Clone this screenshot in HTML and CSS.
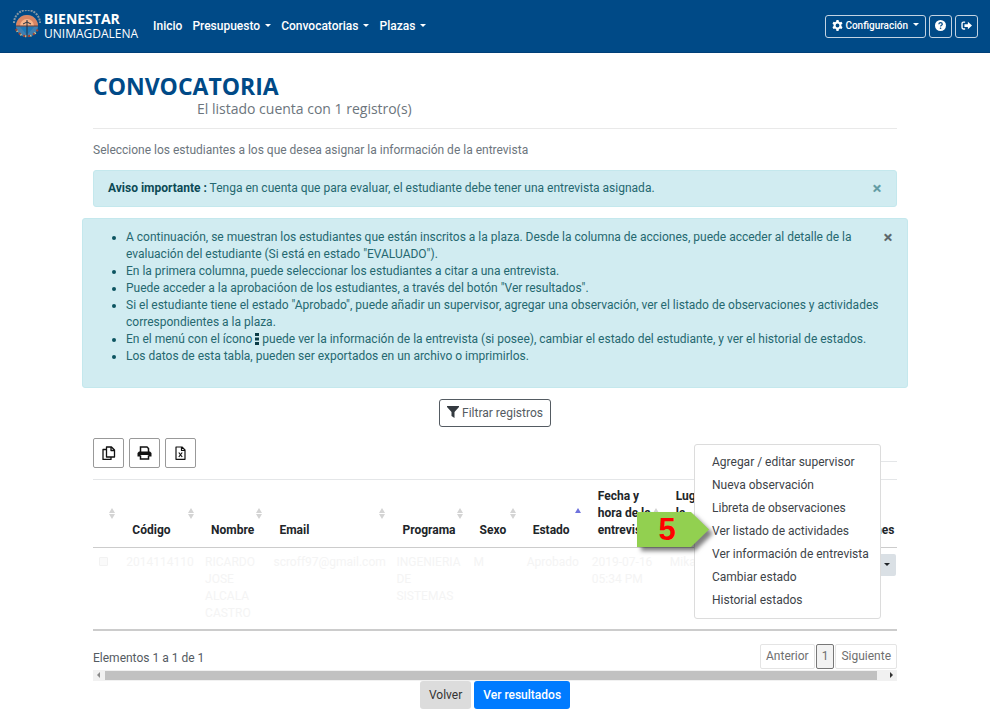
FILE: index.html
```html
<!DOCTYPE html>
<html lang="es">
<head>
<meta charset="utf-8">
<meta name="viewport" content="width=device-width, initial-scale=1">
<title>Bienestar Unimagdalena - Convocatoria</title>
<link rel="stylesheet" href="styles.css">
</head>
<body>
<header class="topbar">
  <a class="brand" href="#">
    <svg class="crest" viewBox="0 0 30 32" aria-hidden="true">
      <path d="M2 13a13 13 0 0 1 26 0" fill="none" stroke="#8496a3" stroke-width="2" stroke-dasharray="2 1" />
      <circle cx="15" cy="16" r="11" fill="#3f7fb0" />
      <path d="M4 16a11 11 0 0 1 22 0z" fill="#d98563" />
      <path d="M8 16a7 7 0 0 1 14 0z" fill="#f7b48a" />
      <path d="M4 16h22" stroke="#5b3d3a" stroke-width="1" />
      <path d="M8 17l7 8 7-8z" fill="#1d78b8" />
      <path d="M15 10v17M11 14l4-2 4 2" fill="none" stroke="#234" stroke-width="1" />
      <path d="M4 19a12 12 0 0 0 22 0" fill="none" stroke="#a5402f" stroke-width="2" stroke-dasharray="2 3" />
      <path d="M5 21a12 12 0 0 0 20 0" fill="none" stroke="#e3cf86" stroke-width="2" stroke-dasharray="1 4" />
    </svg>
    <span class="brand-text"><strong>BIENESTAR</strong><span>UNIMAGDALENA</span></span>
  </a>
  <nav class="nav">
    <a href="#">Inicio</a>
    <a href="#" class="caret">Presupuesto</a>
    <a href="#" class="caret">Convocatorias</a>
    <a href="#" class="caret">Plazas</a>
  </nav>
  <div class="tools">
    <button type="button" class="tool caret">
      <svg viewBox="0 0 16 16" aria-hidden="true"><path fill="currentColor" fill-rule="evenodd" d="M6.5 0h3l.5 2.3 1.5.8 2.3-.7 1.5 2.6L13.6 6.600v2L15.300 10.600l-1.500 2.600-2.300-.7-1.500.9L9.500 16h-3L6 13.400l-1.500-.9-2.300.7L.7 10.600 2.400 8.900v-2L.7 5l1.500-2.600 2.300.7L6 2.300zM8 5.200a2.800 2.800 0 1 0 0 5.600 2.800 2.800 0 0 0 0-5.600z"/></svg>
      Configuración</button>
    <button type="button" class="tool tool-icon" aria-label="Ayuda">
      <svg viewBox="0 0 16 16" aria-hidden="true"><circle cx="8" cy="8" r="8" fill="currentColor"/><path d="M5.600 6.200c.2-3 5-3 5 0 0 1.600-2.400 1.600-2.400 3.300" fill="none" stroke="#004a87" stroke-width="1.800"/><circle cx="8.100" cy="12" r="1.200" fill="#004a87"/></svg>
    </button>
    <button type="button" class="tool tool-icon" aria-label="Salir">
      <svg viewBox="0 0 16 16" aria-hidden="true"><path d="M6 3H3.500Q1.500 3 1.500 5v6q0 2 2 2H6" fill="none" stroke="currentColor" stroke-width="2"/><path d="M5 6h5V2.500L16 8l-6 5.500V10H5z" fill="currentColor"/></svg>
    </button>
  </div>
</header>

<main class="page">
  <div class="heading">
    <h1>CONVOCATORIA</h1>
    <p>El listado cuenta con 1 registro(s)</p>
  </div>
  <p class="lead">Seleccione los estudiantes a los que desea asignar la información de la entrevista</p>

  <section class="alert">
    <p><strong>Aviso importante :</strong> Tenga en cuenta que para evaluar, el estudiante debe tener una entrevista asignada.</p>
    <button type="button" class="close close-soft" aria-label="Cerrar aviso">×</button>
  </section>

  <section class="alert alert-wide">
    <ul>
      <li>A continuación, se muestran los estudiantes que están inscritos a la plaza. Desde la columna de acciones, puede acceder al detalle de la evaluación del estudiante (Si está en estado "EVALUADO").</li>
      <li>En la primera columna, puede seleccionar los estudiantes a citar a una entrevista.</li>
      <li>Puede acceder a la aprobacióon de los estudiantes, a través del botón "Ver resultados".</li>
      <li>Si el estudiante tiene el estado "Aprobado", puede añadir un supervisor, agregar una observación, ver el listado de observaciones y actividades correspondientes a la plaza.</li>
      <li>En el menú con el ícono <svg class="dots" viewBox="0 0 4 12" aria-hidden="true"><path fill="currentColor" d="M0 0h4v3H0zM0 4.500h4v3H0zM0 9h4v3H0z"/></svg> puede ver la información de la entrevista (si posee), cambiar el estado del estudiante, y ver el historial de estados.</li>
      <li>Los datos de esta tabla, pueden ser exportados en un archivo o imprimirlos.</li>
    </ul>
    <button type="button" class="close" aria-label="Cerrar ayuda">×</button>
  </section>

  <button type="button" class="filter">
    <svg viewBox="0 0 12 12" aria-hidden="true"><path fill="currentColor" d="M0 0h12v1L7.500 6v6L4.500 10V6L0 1z"/></svg>
    Filtrar registros</button>

  <div class="table-tools">
    <button type="button" class="export" aria-label="Copiar">
      <svg viewBox="0 0 14 14" aria-hidden="true"><path d="M5 1h5l3 3v7H5zM9.500 1v3.500H13M5 3.500H1.500v10h8V11" fill="none" stroke="currentColor" stroke-width="1.300" stroke-linejoin="round"/></svg>
    </button>
    <button type="button" class="export" aria-label="Imprimir">
      <svg viewBox="0 0 14 14" aria-hidden="true"><path d="M3 6V1h6.500L11 2.500V6M3 9.500V13h8V9.500" fill="none" stroke="currentColor" stroke-width="1.500"/><path d="M1.500 5.500h11L14 7v3.500h-3V9H3v1.500H0V7z" fill="currentColor"/></svg>
    </button>
    <button type="button" class="export" aria-label="Exportar a Excel">
      <svg viewBox="0 0 14 14" aria-hidden="true"><path d="M2.500 1H8.500l3 3v9.300h-9zM8 1v3.500h3.500" fill="none" stroke="currentColor" stroke-width="1.200" stroke-linejoin="round"/><path d="M5.300 6.500l3.400 4.500M8.700 6.500L5.300 11" fill="none" stroke="currentColor" stroke-width="1.200"/></svg>
    </button>
    <input class="search" type="search" aria-label="Buscar">
  </div>

  <table class="grid">
    <colgroup><col class="c-check"><col class="c-code"><col class="c-name"><col class="c-mail"><col class="c-prog"><col class="c-sex"><col class="c-state"><col class="c-date"><col class="c-place"><col></colgroup>
    <thead>
      <tr>
        <th class="sort"></th>
        <th class="sort">Código</th>
        <th class="sort">Nombre</th>
        <th class="sort">Email</th>
        <th class="sort">Programa</th>
        <th class="sort">Sexo</th>
        <th class="sort sorted">Estado</th>
        <th class="sort">Fecha y hora de la entrevista</th>
        <th>Lugar de<br>la<br>entrevista</th>
        <th>Acciones</th>
      </tr>
    </thead>
    <tbody>
      <tr>
        <td><input type="checkbox" class="pick" aria-label="Seleccionar estudiante"></td>
        <td>2014114110</td>
        <td>RICARDO JOSE ALCALA CASTRO</td>
        <td>scroff97@gmail.com</td>
        <td>INGENIERIA DE SISTEMAS</td>
        <td>M</td>
        <td>Aprobado</td>
        <td>2019-07-16 05:34 PM</td>
        <td>Mikas</td>
        <td class="actions">
          <button type="button" class="more caret" aria-label="Más acciones"></button>
          <div class="menu">
            <a href="#">Agregar / editar supervisor</a>
            <a href="#">Nueva observación</a>
            <a href="#">Libreta de observaciones</a>
            <a href="#" class="marked">
              <span class="callout">
                <svg viewBox="0 0 72 35" aria-hidden="true"><path d="M0 0h54l18 17.500L54 35H0z" fill="#92d050"/></svg>
                <b>5</b>
              </span>
              <span class="marked-text">Ver listado de actividades</span></a>
            <a href="#">Ver información de entrevista</a>
            <a href="#">Cambiar estado</a>
            <a href="#">Historial estados</a>
          </div>
        </td>
      </tr>
    </tbody>
  </table>

  <div class="table-foot">
    <span>Elementos 1 a 1 de 1</span>
    <nav class="pager" aria-label="Paginación">
      <button type="button">Anterior</button>
      <button type="button" class="current">1</button>
      <button type="button">Siguiente</button>
    </nav>
  </div>
  <div class="scrollbar" aria-hidden="true">
    <svg viewBox="0 0 12 10"><path d="M7 2v6L4 5z" fill="#8b8b8b"/></svg>
    <div class="track"><div class="thumb"></div></div>
    <svg viewBox="0 0 12 10"><path d="M5 2v6l3-3z" fill="#333"/></svg>
  </div>
  <div class="page-actions">
    <button type="button" class="btn">Volver</button>
    <button type="button" class="btn btn-primary">Ver resultados</button>
  </div>
</main>
</body>
</html>
```
FILE: styles.css
```css
* { box-sizing: border-box; }
body {
  margin: 0;
  background: #fff;
  color: #545b62;
  font: 12px/17px Roboto, "Liberation Sans", sans-serif;
}
button, input { font: inherit; color: inherit; margin: 0; }
h1, p, ul { margin: 0; }
a { color: inherit; text-decoration: none; }

.topbar {
  display: flex;
  align-items: center;
  height: 53px;
  padding: 0 12px;
  background: #004a87;
  border-bottom: 1px solid #003f78;
  color: #fff;
}
.brand { display: flex; align-items: center; gap: 2px; margin-right: 15px; }
.crest { width: 30px; height: 32px; }
.brand-text {
  display: flex;
  flex-direction: column;
  font: 12px/15px "Open Sans", sans-serif;
}
.brand-text strong { font-size: 14px; }
.nav { display: flex; gap: 10px; padding-top: 1px; font-weight: 500; }
.caret::after {
  content: "";
  display: inline-block;
  margin-left: 5px;
  vertical-align: 3px;
  border: 3px solid transparent;
  border-top-color: currentColor;
  border-bottom: 0;
}
.tools { display: flex; gap: 3px; margin-left: auto; }
.tool {
  height: 23px;
  padding: 0 6px;
  border: 1px solid #c3d3e2;
  border-radius: 3px;
  background: none;
  font-size: 10px;
  font-weight: 500;
  line-height: 14px;
  white-space: nowrap;
}
.tool svg { width: 11px; height: 11px; vertical-align: -2px; }
.tool-icon { width: 23px; padding: 0; }

.page { padding: 20px 93px 0; }
.heading { padding-bottom: 11px; border-bottom: 1px solid #e9e9e9; font-family: "Open Sans", sans-serif; }
.heading h1 { color: #004a87; font-size: 23px; line-height: 27px; }
.heading p { padding-left: 104px; color: #6c757d; font-size: 14px; line-height: 17px; }
.lead { margin: 13px 0 11px; color: #6c757d; }

.alert {
  display: flex;
  align-items: flex-start;
  justify-content: space-between;
  padding: 9px 14px;
  border: 1px solid #c4e8ed;
  border-radius: 3px;
  background: #d1ecf1;
  color: #256870;
}
.alert strong { color: #0c4a55; }
.alert-wide { margin: 11px -11px; padding: 10px 14px 20px; min-height: 170px; }
.alert-wide ul { flex: 1; padding: 0 4px 0 29px; }
.alert-wide li::marker { color: #0c5460; }
.dots { width: 4px; height: 12px; vertical-align: -2px; color: #0c3c46; }
.close {
  width: 10px;
  padding: 0;
  border: 0;
  background: none;
  color: #5d686c;
  font-size: 17px;
  font-weight: 700;
  line-height: 17px;
}
.close-soft { color: #639da5; }

.filter {
  display: block;
  margin: 0 auto 11px;
  height: 28px;
  padding: 0 7px;
  border: 1px solid #545b62;
  border-radius: 3px;
  background: #fff;
}
.filter svg { width: 12px; height: 12px; vertical-align: -1px; color: #343a40; }

.table-tools { display: flex; gap: 5px; height: 30px; margin-bottom: 11px; }
.export { padding: 0 7px; border: 1px solid #999; border-radius: 2px; background: #fff; color: #111; }
.export svg { display: block; width: 15px; height: 14px; margin: 0 auto; }
.search { width: 150px; height: 24px; margin-left: auto; border: 0; border-bottom: 1px solid #e4e6e8; background: none; }

.grid {
  width: 100%;
  table-layout: fixed;
  border-collapse: separate;
  border-spacing: 0;
  border-bottom: 2px solid #ccc;
}
.c-check { width: 3.4%; }
.c-code { width: 9.8%; }
.c-name { width: 8.5%; }
.c-mail { width: 15.3%; }
.c-prog { width: 9.6%; }
.c-sex { width: 6.6%; }
.c-state { width: 8.1%; }
.c-date { width: 9.7%; }
.c-place { width: 21%; }
.grid th {
  position: relative;
  padding: 8px 0 8px 12px;
  border-top: 1px solid #e4e6e8;
  border-bottom: 1px solid #ccc;
  color: #212529;
  font-weight: 700;
  text-align: left;
  vertical-align: bottom;
}
.grid td { height: 81px; padding: 6px 0 6px 6px; color: #f4f4f4; vertical-align: top; }
.sort::before, .sort::after {
  content: "";
  position: absolute;
  right: 5px;
  border: 3px solid transparent;
}
.sort::before { bottom: 34px; border-bottom: 5px solid #d4d4d4; border-top: 0; }
.sort::after { bottom: 28px; border-top: 5px solid #d4d4d4; border-bottom: 0; }
.sorted::before { border-bottom-color: #6f73dd; }
.sorted::after { display: none; }
.pick {
  appearance: none;
  width: 9px;
  height: 9px;
  border: 1px solid #f2f2f2;
  border-radius: 1px;
  background: #fafafa;
}

.grid td.actions { position: relative; text-align: right; }
.more { width: 30px; height: 22px; padding: 0 6px; margin-right: 1px; border: 0; border-radius: 2px; background: #dae0e5; color: #212529; text-align: right; }
.more.caret::after { margin: 0; }
.menu {
  position: absolute;
  right: 16px;
  bottom: 10px;
  z-index: 2;
  width: 187px;
  padding: 6px 0;
  border: 1px solid #dcdcdc;
  border-radius: 3px;
  background: #fff;
  color: #3d4348;
  text-align: left;
}
.menu a { display: block; padding-left: 17px; line-height: 23px; white-space: nowrap; }
.marked { position: relative; }
.marked-text { position: relative; }
.callout { position: absolute; left: -58px; top: -8px; width: 72px; height: 35px; }
.callout svg { display: block; width: 72px; height: 35px; filter: drop-shadow(4px 4px 2px rgba(0, 0, 0, .5)); }
.callout b {
  position: absolute;
  inset: 0 12px 0 0;
  color: #f00;
  font: 700 31px/35px "Liberation Sans", sans-serif;
  text-align: center;
}

.table-foot { display: flex; align-items: flex-end; justify-content: space-between; margin-top: 13px; }
.table-foot span { padding-bottom: 2px; }
.pager { display: flex; gap: 1px; }
.pager button { height: 25px; padding: 0 5px; border: 1px solid #e4e4e4; border-radius: 2px; background: #fff; color: #6f6f6f; }
.pager .current { border-color: #777; background: #f2f2f2; }
.scrollbar { display: flex; height: 11px; margin-top: 1px; background: #f1f1f1; }
.scrollbar svg { width: 12px; height: 10px; }
.track { flex: 1; padding: 1px 0; }
.thumb { width: 99%; height: 9px; background: #c1c1c1; }
.page-actions { display: flex; justify-content: center; gap: 3px; }
.btn { height: 28px; padding: 0 9px; border: 0; border-radius: 3px; background: #dcdcdc; color: #333; }
.btn-primary { background: #007bff; color: #fff; font-weight: 500; }
```
